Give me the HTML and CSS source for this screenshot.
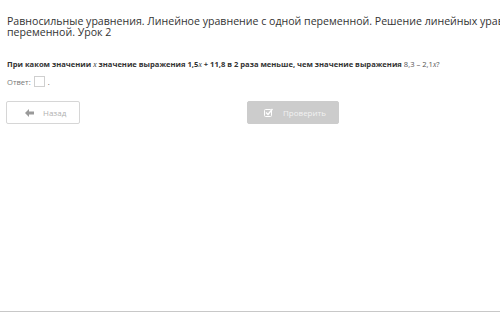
FILE: index.html
```html
<!DOCTYPE html>
<html>
<head>
  <meta charset="utf-8">
  <link rel="stylesheet" href="styles.css">
</head>
<body>
  <div class="page">
    <h1 class="title">Равносильные уравнения. Линейное уравнение с одной переменной. Решение линейных уравнений с одной переменной. Урок 2</h1>

    <div class="question">
      <b>При каком значении <i class="var">x</i> значение выражения 1,5<i class="var">x</i> + 11,8 в 2 раза меньше, чем значение выражения</b> 8,3 – 2,1<i class="var">x</i>?
    </div>

    <div class="answer">
      <span class="answer-label">Ответ:</span>
      <span class="answer-box"></span>
      <span class="dot">.</span>
    </div>

    <div class="nav">
      <button class="btn btn-back">
        <svg class="icon" width="9" height="8" viewBox="0 0 9 8"><path d="M4 0 L0 4 L4 8 L4 5.5 L9 5.5 L9 2.5 L4 2.5 Z" fill="#9a9a9a"/></svg>
        Назад
      </button>
      <button class="btn btn-check">
        <svg class="icon" width="9" height="9" viewBox="0 0 9 9"><rect x="0.5" y="1.5" width="7" height="7" rx="1" fill="none" stroke="#fff" stroke-width="1"/><path d="M2 4.5 L4 6.5 L8.5 1" fill="none" stroke="#fff" stroke-width="1.4"/></svg>
        Проверить
      </button>
    </div>
  </div>
</body>
</html>
```

FILE: styles.css
```css
* {
  box-sizing: border-box;
}

body {
  margin: 0;
  background: #fff;
  font-family: "Open Sans", Arial, sans-serif;
  color: #333;
}

.page {
  height: 312px;
  padding: 16px 7px 0;
  border-bottom: 1px solid #c8c8c8;
  overflow: hidden;
}

.title {
  margin: 0;
  font-size: 10.6px;
  font-weight: 400;
  line-height: 11px;
  width: 600px;
}

.question {
  margin-top: 21px;
  font-size: 7.6px;
  line-height: 10px;
  color: #555;
  white-space: nowrap;
}

.question b {
  color: #333;
  font-weight: 700;
}

.var {
  font-family: "Liberation Serif", serif;
  font-style: italic;
  font-weight: 400;
}

.answer {
  display: flex;
  align-items: center;
  gap: 3px;
  margin-top: 6px;
  font-size: 7.6px;
  color: #777;
}

.answer-box {
  display: inline-block;
  width: 11px;
  height: 11px;
  border: 1px solid #cfcfcf;
  background: #fff;
}

.dot {
  color: #555;
}

.nav {
  display: flex;
  margin-top: 14px;
  margin-left: -1px;
}

.btn {
  display: flex;
  align-items: center;
  height: 23px;
  padding: 0;
  border: 1px solid #d6d6d6;
  border-radius: 2px;
  font-family: "Open Sans", Arial, sans-serif;
  font-size: 8px;
}

.btn-back {
  width: 74px;
  padding-left: 18px;
  gap: 9px;
  background: #fff;
  color: #b0b0b0;
}

.btn-check {
  width: 92px;
  margin-left: 167px;
  padding-left: 16px;
  gap: 10px;
  background: #cccccc;
  border-color: #cccccc;
  color: #f2f2f2;
}
```
